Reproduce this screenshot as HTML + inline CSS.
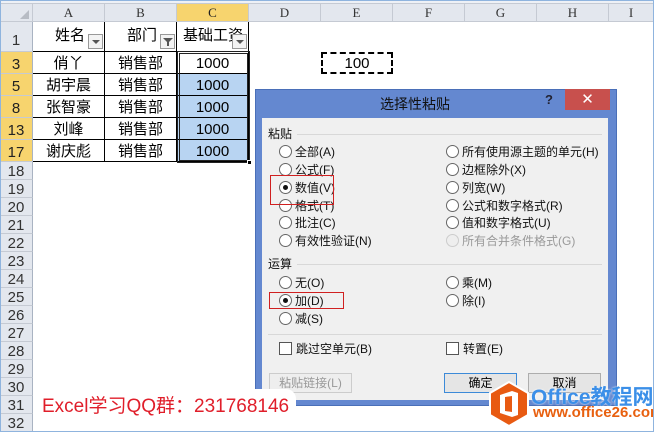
<!DOCTYPE html>
<html><head><meta charset="utf-8"><style>
*{margin:0;padding:0;box-sizing:border-box}
body{width:654px;height:432px;overflow:hidden;background:#fff;position:relative;font-family:"Liberation Serif","Noto Serif CJK SC",serif;}
.a{position:absolute}
.ch{position:absolute;top:4px;height:18px;background:#e3e7ee;border-right:1px solid #c5cad3;border-bottom:1px solid #c5cad3;font-size:13px;color:#333;text-align:center;line-height:18px}
.rh{position:absolute;left:0;width:33px;background:#e3e7ee;border-bottom:1px solid #c5cad3;border-right:1px solid #a9b3c2;font-size:15px;color:#333;text-align:center;font-family:"Liberation Sans",sans-serif}
.sel{background:#f7d46e;color:#222}
.c{position:absolute;height:22px;border-right:1px solid #000;border-bottom:1px solid #000;font-family:"Liberation Sans","Noto Sans CJK SC",sans-serif;font-size:15px;text-align:center;line-height:23px;color:#000}
.dl{font-family:"Liberation Sans","Noto Sans CJK SC",sans-serif;font-size:12px;color:#111;position:absolute;line-height:14px;white-space:nowrap}
.rb{display:inline-block;width:13px;height:13px;border:1px solid #666;border-radius:50%;background:#fff;vertical-align:-2px;margin-right:3px;position:relative}
.rb.on:after{content:"";position:absolute;left:3px;top:3px;width:5px;height:5px;border-radius:50%;background:#111}
.cb{display:inline-block;width:13px;height:13px;border:1px solid #555;background:#fff;vertical-align:-2px;margin-right:4px}
.btn{position:absolute;height:20px;border:1px solid #adadad;background:#e5e5e5;font-family:"Liberation Sans","Noto Sans CJK SC",sans-serif;font-size:12px;text-align:center;line-height:18px}
</style></head><body>
<div class="a" style="left:0;top:0;width:654px;height:4px;background:#eef1f6;border-bottom:1px solid #c5cad3"></div>
<div class="a" style="left:0;top:0;width:654px;height:432px;border:1px solid #8fb4de;z-index:50;pointer-events:none"></div>
<div class="ch" style="left:0;width:33px"></div>
<div class="a" style="left:20px;top:10px;width:0;height:0;border-left:9px solid transparent;border-bottom:9px solid #b7bcc4"></div>
<div class="ch" style="left:33px;width:72px">A</div>
<div class="ch" style="left:105px;width:72px">B</div>
<div class="ch sel" style="left:177px;width:72px">C</div>
<div class="ch" style="left:249px;width:72px">D</div>
<div class="ch" style="left:321px;width:72px">E</div>
<div class="ch" style="left:393px;width:72px">F</div>
<div class="ch" style="left:465px;width:72px">G</div>
<div class="ch" style="left:537px;width:72px">H</div>
<div class="ch" style="left:609px;width:45px">I</div>

<div class="rh" style="top:22px;height:30px;line-height:38px">1</div>
<div class="rh sel" style="top:52px;height:22px;line-height:26px">3</div>
<div class="rh sel" style="top:74px;height:22px;line-height:26px">5</div>
<div class="rh sel" style="top:96px;height:22px;line-height:26px">8</div>
<div class="rh sel" style="top:118px;height:22px;line-height:26px">13</div>
<div class="rh sel" style="top:140px;height:22px;line-height:26px">17</div>
<div class="rh" style="top:162px;height:18px;line-height:19px">18</div>
<div class="rh" style="top:180px;height:18px;line-height:19px">19</div>
<div class="rh" style="top:198px;height:18px;line-height:19px">20</div>
<div class="rh" style="top:216px;height:18px;line-height:19px">21</div>
<div class="rh" style="top:234px;height:18px;line-height:19px">22</div>
<div class="rh" style="top:252px;height:18px;line-height:19px">23</div>
<div class="rh" style="top:270px;height:18px;line-height:19px">24</div>
<div class="rh" style="top:288px;height:18px;line-height:19px">25</div>
<div class="rh" style="top:306px;height:18px;line-height:19px">26</div>
<div class="rh" style="top:324px;height:18px;line-height:19px">27</div>
<div class="rh" style="top:342px;height:18px;line-height:19px">28</div>
<div class="rh" style="top:360px;height:18px;line-height:19px">29</div>
<div class="rh" style="top:378px;height:18px;line-height:19px">30</div>
<div class="rh" style="top:396px;height:18px;line-height:19px">31</div>
<div class="rh" style="top:414px;height:18px;line-height:19px">32</div>

<div class="c" style="left:33px;top:22px;width:72px;height:30px;line-height:28px;text-align:left;padding-left:22px">姓名</div>
<div class="c" style="left:105px;top:22px;width:72px;height:30px;line-height:28px;text-align:left;padding-left:22px">部门</div>
<div class="c" style="left:177px;top:22px;width:72px;height:30px;line-height:28px;text-align:left;padding-left:6px;overflow:hidden;white-space:nowrap">基础工资</div>
<div class="a" style="left:88px;top:34px;width:15px;height:15px;border:1px solid #999;background:#f3f3f3"><div class="a" style="left:3px;top:5px;border-left:4px solid transparent;border-right:4px solid transparent;border-top:4px solid #555"></div></div>
<div class="a" style="left:160px;top:34px;width:15px;height:15px;border:1px solid #999;background:#f3f3f3"><div class="a" style="left:2px;top:3px;border-left:5px solid transparent;border-right:5px solid transparent;border-top:5px solid #555"></div><div class="a" style="left:6px;top:7px;width:2px;height:4px;background:#555"></div></div>
<div class="a" style="left:232px;top:34px;width:15px;height:15px;border:1px solid #999;background:#f3f3f3"><div class="a" style="left:3px;top:5px;border-left:4px solid transparent;border-right:4px solid transparent;border-top:4px solid #555"></div></div>

<div class="c" style="left:33px;top:52px;width:72px">俏丫</div><div class="c" style="left:105px;top:52px;width:72px">销售部</div><div class="c" style="left:177px;top:52px;width:72px;background:#fff">1000</div>
<div class="c" style="left:33px;top:74px;width:72px">胡宇晨</div><div class="c" style="left:105px;top:74px;width:72px">销售部</div><div class="c" style="left:177px;top:74px;width:72px;background:#b8d4f2">1000</div>
<div class="c" style="left:33px;top:96px;width:72px">张智豪</div><div class="c" style="left:105px;top:96px;width:72px">销售部</div><div class="c" style="left:177px;top:96px;width:72px;background:#b8d4f2">1000</div>
<div class="c" style="left:33px;top:118px;width:72px">刘峰</div><div class="c" style="left:105px;top:118px;width:72px">销售部</div><div class="c" style="left:177px;top:118px;width:72px;background:#b8d4f2">1000</div>
<div class="c" style="left:33px;top:140px;width:72px">谢庆彪</div><div class="c" style="left:105px;top:140px;width:72px">销售部</div><div class="c" style="left:177px;top:140px;width:72px;background:#b8d4f2">1000</div>
<div class="a" style="left:177px;top:51px;width:73px;height:112px;border-style:double;border-width:3px;border-color:#222"></div>
<div class="a" style="left:247px;top:160px;width:5px;height:5px;background:#000;border:1px solid #fff"></div>

<div class="a" style="left:321px;top:52px;width:72px;height:22px;border:2px dashed #000;font-size:15px;text-align:center;line-height:19px;font-family:'Liberation Sans',sans-serif">100</div>

<div class="a" style="left:255px;top:89px;width:362px;height:317px;background:#6488d0;border:1px solid #4a6fb8"></div>
<div class="a" style="left:380px;top:94px;font-family:'Liberation Sans','Noto Sans CJK SC',sans-serif;font-size:14px;color:#111">选择性粘贴</div>
<div class="a" style="left:545px;top:92px;font-family:'Liberation Sans',sans-serif;font-size:13px;font-weight:bold;color:#223">?</div>
<div class="a" style="left:565px;top:89px;width:45px;height:21px;background:#c8504d;color:#fff;text-align:center;font-family:'Liberation Sans',sans-serif;font-size:15px;line-height:21px">✕</div>
<div class="a" style="left:262px;top:118px;width:346px;height:282px;background:#f0f0f0"></div>

<div class="dl" style="left:268px;top:127px">粘贴</div>
<div class="a" style="left:297px;top:134px;width:305px;height:1px;background:#d8d8d8"></div>
<div class="dl" style="left:279px;top:145px"><span class="rb"></span>全部(A)</div>
<div class="dl" style="left:279px;top:163px"><span class="rb"></span>公式(F)</div>
<div class="dl" style="left:279px;top:181px"><span class="rb on"></span>数值(V)</div>
<div class="dl" style="left:279px;top:199px"><span class="rb"></span>格式(T)</div>
<div class="dl" style="left:279px;top:216px"><span class="rb"></span>批注(C)</div>
<div class="dl" style="left:279px;top:234px"><span class="rb"></span>有效性验证(N)</div>
<div class="dl" style="left:446px;top:145px"><span class="rb"></span>所有使用源主题的单元(H)</div>
<div class="dl" style="left:446px;top:163px"><span class="rb"></span>边框除外(X)</div>
<div class="dl" style="left:446px;top:181px"><span class="rb"></span>列宽(W)</div>
<div class="dl" style="left:446px;top:199px"><span class="rb"></span>公式和数字格式(R)</div>
<div class="dl" style="left:446px;top:216px"><span class="rb"></span>值和数字格式(U)</div>
<div class="dl" style="left:446px;top:234px;color:#999"><span class="rb" style="border-color:#ccc;background:#eee"></span>所有合并条件格式(G)</div>
<div class="a" style="left:270px;top:175px;width:64px;height:30px;border:1px solid #d02020"></div>

<div class="dl" style="left:268px;top:257px">运算</div>
<div class="a" style="left:297px;top:264px;width:305px;height:1px;background:#d8d8d8"></div>
<div class="dl" style="left:279px;top:276px"><span class="rb"></span>无(O)</div>
<div class="dl" style="left:279px;top:294px"><span class="rb on"></span>加(D)</div>
<div class="dl" style="left:279px;top:312px"><span class="rb"></span>减(S)</div>
<div class="dl" style="left:446px;top:276px"><span class="rb"></span>乘(M)</div>
<div class="dl" style="left:446px;top:294px"><span class="rb"></span>除(I)</div>
<div class="a" style="left:269px;top:292px;width:75px;height:17px;border:1px solid #d02020"></div>
<div class="a" style="left:268px;top:334px;width:334px;height:1px;background:#d8d8d8"></div>
<div class="dl" style="left:279px;top:342px"><span class="cb"></span>跳过空单元(B)</div>
<div class="dl" style="left:446px;top:342px"><span class="cb"></span>转置(E)</div>

<div class="btn" style="left:269px;top:373px;width:83px;color:#999;border-color:#ccc;background:#eee">粘贴链接(L)</div>
<div class="btn" style="left:444px;top:373px;width:73px;border-color:#3c8ad8">确定</div>
<div class="btn" style="left:528px;top:373px;width:73px">取消</div>

<div class="a" style="left:36px;top:389px;width:260px;height:30px;background:#fff;border-radius:10px"></div>
<div class="a" style="left:42px;top:391px;font-family:'Liberation Sans','Noto Sans CJK SC',sans-serif;font-size:19px;color:#e01e2a;white-space:nowrap">Excel学习QQ群：231768146</div>

<svg class="a" style="left:488px;top:381px" width="42" height="46" viewBox="0 0 42 46">
<polygon points="21,1 40,12 40,34 21,45 2,34 2,12" fill="#e85a12" stroke="#fff" stroke-width="2"/>
<path d="M12 14 L24 10 L30 12 L30 34 L24 36 L12 32 Z M17 16 L17 30 L24 31 L24 15 Z" fill="#fff" fill-rule="evenodd"/>
</svg>
<div class="a" style="left:531px;top:381px;font-family:'Liberation Sans','Noto Sans CJK SC',sans-serif;font-size:21px;font-weight:bold;color:#3b8fe8;white-space:nowrap;text-shadow:0 0 2px #fff">Office教程网</div>
<div class="a" style="left:533px;top:404px;font-family:'Liberation Sans',sans-serif;font-size:15px;font-weight:bold;color:#e8600f;white-space:nowrap">www.office26.com</div>
</body></html>
